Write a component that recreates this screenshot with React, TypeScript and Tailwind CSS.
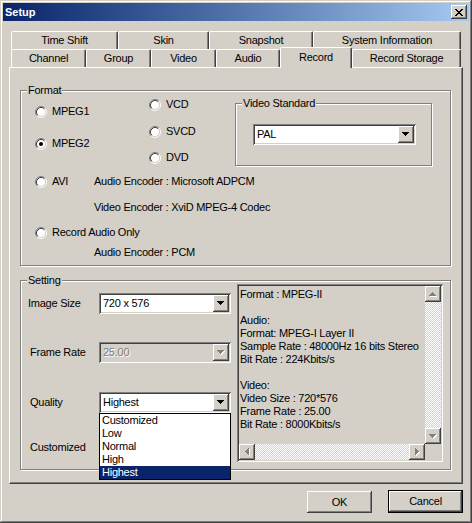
import React from "react";

const RAISED = "shadow-[inset_-1px_-1px_#404040,inset_1px_1px_#fff,inset_-2px_-2px_#808080]";
const SUNKEN = "shadow-[inset_1px_1px_#808080,inset_-1px_-1px_#fff,inset_2px_2px_#404040,inset_-2px_-2px_#d4d0c8]";
const CHECKER = "bg-[image:repeating-conic-gradient(#fff_0_25%,#d4d0c8_0_50%)] bg-[length:2px_2px]";

const ROW1 = [
  { label: "Time Shift", w: "w-[107px]" },
  { label: "Skin", w: "w-[91px]" },
  { label: "Snapshot", w: "w-[104px]" },
  { label: "System Information", w: "w-[148px]" },
];

const ROW2 = [
  { label: "Channel", w: "w-[75px]" },
  { label: "Group", w: "w-[65px]" },
  { label: "Video", w: "w-[65px]" },
  { label: "Audio", w: "w-[64px]" },
  { label: "Record", w: "w-[72px]", sel: true },
  { label: "Record Storage", w: "w-[109px]" },
];

const INFO = [
  "Format : MPEG-II",
  "",
  "Audio:",
  "Format: MPEG-I Layer II",
  "Sample Rate : 48000Hz 16 bits Stereo",
  "Bit Rate : 224Kbits/s",
  "",
  "Video:",
  "Video Size : 720*576",
  "Frame Rate : 25.00",
  "Bit Rate : 8000Kbits/s",
];

const QUALITY = ["Customized", "Low", "Normal", "High", "Highest"];

type Dir = "up" | "down" | "left" | "right";

// little 7x4 arrow, drawn pixel by pixel
function Tri({ dir, gray }: { dir: Dir; gray?: boolean }) {
  const sizes = [7, 5, 3, 1];
  const vertical = dir === "up" || dir === "down";
  const cells = sizes.map((_, i) => {
    const k = dir === "down" || dir === "right" ? i : 3 - i;
    const len = sizes[k];
    return vertical ? { x: k, y: i, w: len, h: 1 } : { x: i, y: k, w: 1, h: len };
  });
  const draw = (fill: string, o: number) =>
    cells.map((c, i) => (
      <rect key={fill + i} x={c.x + o} y={c.y + o} width={c.w} height={c.h} fill={fill} />
    ));
  return (
    <svg width={vertical ? 8 : 5} height={vertical ? 5 : 8} shapeRendering="crispEdges">
      {gray && draw("#fff", 1)}
      {draw(gray ? "#808080" : "#000", 0)}
    </svg>
  );
}

function CloseGlyph() {
  const rows = ["xx....xx", ".xx..xx.", "..xxxx..", "...xx...", "..xxxx..", ".xx..xx.", "xx....xx"];
  return (
    <svg width="8" height="7" shapeRendering="crispEdges">
      {rows.flatMap((r, y) =>
        r.split("").map((ch, x) => (ch === "x" ? <rect key={`${x}-${y}`} x={x} y={y} width="1" height="1" fill="#000" /> : null))
      )}
    </svg>
  );
}

function RadioDot({ checked }: { checked?: boolean }) {
  return (
    <svg width="12" height="12" viewBox="0 0 12 12" className="shrink-0">
      <circle cx="6" cy="6" r="4.5" fill="#fff" />
      <path d="M2.11 9.89A5.5 5.5 0 0 1 9.89 2.11" fill="none" stroke="#808080" />
      <path d="M9.89 2.11A5.5 5.5 0 0 1 2.11 9.89" fill="none" stroke="#fff" />
      <path d="M2.82 9.18A4.5 4.5 0 0 1 9.18 2.82" fill="none" stroke="#404040" />
      <path d="M9.18 2.82A4.5 4.5 0 0 1 2.82 9.18" fill="none" stroke="#d4d0c8" />
      {checked && <circle cx="6" cy="6" r="2" fill="#000" />}
    </svg>
  );
}

function Radio({ label, checked, className = "" }: { label: string; checked?: boolean; className?: string }) {
  return (
    <div className={`flex h-[13px] items-center ${className}`}>
      <RadioDot checked={checked} />
      <span className="ml-[5px] whitespace-nowrap">{label}</span>
    </div>
  );
}

function Group({ label, className, children }: { label: string; className: string; children?: React.ReactNode }) {
  return (
    <div className={`relative shrink-0 border border-[#808080] shadow-[inset_1px_1px_#fff,1px_1px_#fff] ${className}`}>
      <span className="absolute -top-[7px] left-[6px] bg-[#d4d0c8] px-px">{label}</span>
      {children}
    </div>
  );
}

function Combo({ value, disabled, className = "" }: { value: string; disabled?: boolean; className?: string }) {
  return (
    <div
      className={`flex h-[21px] items-center p-[2px] ${SUNKEN} ${
        disabled ? "bg-[#d4d0c8] text-[#808080] [text-shadow:1px_1px_#fff]" : "bg-white"
      } ${className}`}
    >
      <span className="flex-1 truncate pl-[2px]">{value}</span>
      <span className={`flex h-[17px] w-[16px] items-center justify-center bg-[#d4d0c8] ${RAISED}`}>
        <Tri dir="down" gray={disabled} />
      </span>
    </div>
  );
}

function ScrollBtn({ dir }: { dir: Dir }) {
  return (
    <span className={`flex h-[16px] w-[16px] shrink-0 items-center justify-center bg-[#d4d0c8] ${RAISED}`}>
      <Tri dir={dir} gray />
    </span>
  );
}

function Tab({ label, w, sel }: { label: string; w: string; sel?: boolean }) {
  return (
    <div
      className={`flex items-center justify-center rounded-t-[2px] border-x border-t border-t-white border-l-white border-r-[#404040] bg-[#d4d0c8] shadow-[inset_-1px_0_#808080] ${w} ${
        sel ? "relative z-10 -mt-[2px] h-[21px] pb-[2px]" : "h-[18px]"
      }`}
    >
      {label}
    </div>
  );
}

export default function App() {
  return (
    <div className="h-[523px] w-[472px] bg-[#d4d0c8] pt-[3px] font-['Liberation_Sans',Arial,sans-serif] text-[11px] leading-[13px] tracking-[-0.25px] text-black shadow-[inset_-1px_-1px_#404040,inset_1px_1px_#d4d0c8,inset_-2px_-2px_#808080,inset_2px_2px_#fff]">
      {/* title bar */}
      <div className="mx-[3px] flex h-[18px] items-center justify-between bg-linear-to-r from-[#0a246a] to-[#a6caf0] pl-[2px] pr-[2px]">
        <span className="font-bold tracking-normal text-white">Setup</span>
        <span className={`flex h-[14px] w-[16px] items-center justify-center bg-[#d4d0c8] ${RAISED}`}>
          <CloseGlyph />
        </span>
      </div>

      {/* tabs */}
      <div className="ml-[11px] mt-[10px]">
        <div className="flex">
          {ROW1.map((t) => (
            <Tab key={t.label} label={t.label} w={t.w} />
          ))}
        </div>
        <div className="flex h-[18px]">
          {ROW2.map((t) => (
            <Tab key={t.label} label={t.label} w={t.w} sel={t.sel} />
          ))}
        </div>
      </div>

      {/* tab page */}
      <div className="ml-[9px] h-[417px] w-[454px] border border-white border-b-[#404040] border-r-[#404040] shadow-[inset_-1px_-1px_#808080]">
        <Group label="Format" className="ml-[10px] mt-[22px] h-[176px] w-[431px]">
          <div className="flex pl-[14px]">
            <div className="w-[114px]">
              <Radio label="MPEG1" className="mt-[14px]" />
              <Radio label="MPEG2" checked className="mt-[19px]" />
            </div>
            <div className="w-[86px]">
              <Radio label="VCD" className="mt-[7px]" />
              <Radio label="SVCD" className="mt-[14px]" />
              <Radio label="DVD" className="mt-[13px]" />
            </div>
            <Group label="Video Standard" className="mt-[12px] h-[63px] w-[197px]">
              <Combo value="PAL" className="ml-[17px] mt-[20px] w-[163px]" />
            </Group>
          </div>
          <div className="mt-[9px] flex pl-[14px]">
            <Radio label="AVI" className="w-[59px]" />
            <span>Audio Encoder : Microsoft ADPCM</span>
          </div>
          <p className="mt-[13px] pl-[73px]">Video Encoder : XviD MPEG-4 Codec</p>
          <Radio label="Record Audio Only" className="mt-[12px] pl-[14px]" />
          <p className="mt-[7px] pl-[73px]">Audio Encoder : PCM</p>
        </Group>

        <Group label="Setting" className="ml-[10px] mt-[14px] h-[190px] w-[431px]">
          <div className="flex">
            <div className="w-[216px]">
              <div className="mt-[12px] flex h-[21px] items-center">
                <span className="w-[78px] pl-[7px]">Image Size</span>
                <Combo value="720 x 576" className="w-[132px]" />
              </div>
              <div className="mt-[28px] flex h-[21px] items-center">
                <span className="w-[78px] pl-[9px]">Frame Rate</span>
                <Combo value="25.00" disabled className="w-[132px]" />
              </div>
              <div className="mt-[29px] flex h-[21px] items-center">
                <span className="w-[78px] pl-[9px]">Quality</span>
                <div className="relative">
                  <Combo value="Highest" className="w-[132px]" />
                  <ul className="absolute left-0 top-full z-10 w-[132px] border border-black bg-white">
                    {QUALITY.map((q) => (
                      <li
                        key={q}
                        className={`h-[13px] pl-[2px] ${q === "Highest" ? "bg-[#0a246a] text-white" : ""}`}
                      >
                        {q}
                      </li>
                    ))}
                  </ul>
                </div>
              </div>
              <p className="mt-[28px] pl-[9px]">Customized</p>
            </div>

            <div className={`mt-[3px] flex h-[178px] w-[206px] flex-col bg-[#d4d0c8] p-[2px] ${SUNKEN}`}>
              <div className="flex min-h-0 flex-1">
                <div className="min-w-0 flex-1 overflow-hidden whitespace-nowrap pl-[1px] pt-[2px]">
                  {INFO.map((line, i) => (
                    <div key={i} className="h-[13px]">
                      {line}
                    </div>
                  ))}
                </div>
                <div className="flex w-[16px] flex-col">
                  <ScrollBtn dir="up" />
                  <div className={`flex-1 ${CHECKER}`} />
                  <ScrollBtn dir="down" />
                </div>
              </div>
              <div className="flex h-[16px]">
                <ScrollBtn dir="left" />
                <div className={`flex-1 ${CHECKER}`} />
                <ScrollBtn dir="right" />
                <div className="w-[16px]" />
              </div>
            </div>
          </div>
        </Group>
      </div>

      {/* buttons */}
      <div className="mr-[9px] mt-[6px] flex items-start justify-end gap-[16px]">
        <button className={`mt-[1px] h-[22px] w-[65px] bg-[#d4d0c8] ${RAISED}`}>OK</button>
        <button className="h-[23px] w-[75px] border border-black bg-[#d4d0c8]">
          <span className={`flex h-full w-full items-center justify-center ${RAISED}`}>Cancel</span>
        </button>
      </div>
    </div>
  );
}
